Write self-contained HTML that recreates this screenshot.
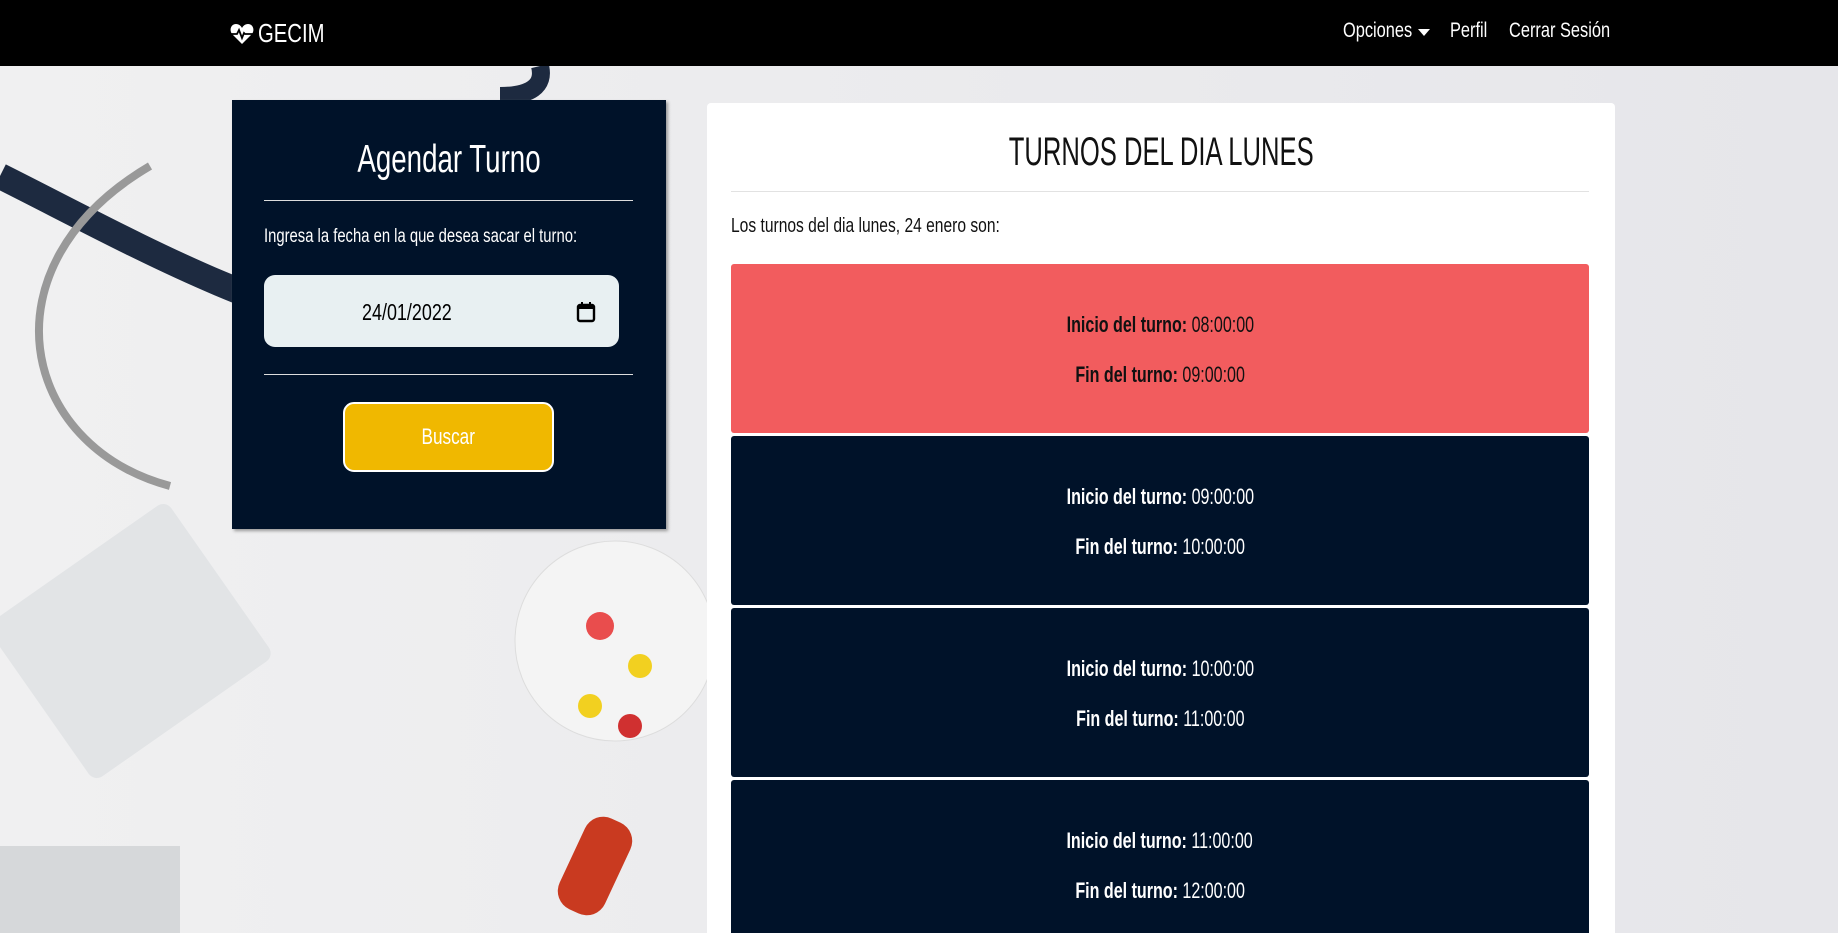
<!DOCTYPE html>
<html><head><meta charset="utf-8">
<style>
*{box-sizing:border-box;margin:0;padding:0}
html,body{width:1838px;height:933px;overflow:hidden}
body{font-family:"Liberation Sans",sans-serif;background:#e9e9ec;position:relative}
.wrap{position:absolute;left:0;top:0;width:1838px;height:933px;overflow:hidden}
.n{display:inline-block;transform:scaleX(.78);transform-origin:left center;white-space:nowrap}
.c{display:inline-block;transform:scaleX(.78);transform-origin:center center;white-space:nowrap}
.bg{position:absolute;left:0;top:66px;width:1838px;height:867px;background:linear-gradient(90deg,#f0f0f1 0%,#ececee 40%,#e6e6ea 100%)}
nav{position:absolute;left:0;top:0;width:1838px;height:66px;background:#000;color:#fff}
.brand{position:absolute;left:230px;top:18px;font-size:26px;display:flex;align-items:center;gap:4px}
.nl{position:absolute;top:19px;font-size:21px}
.card1{position:absolute;left:232px;top:100px;width:434px;height:429px;background:#001229;color:#fff;box-shadow:2px 2px 3px #999}
.card1 h2{position:absolute;left:0;width:100%;top:38px;text-align:center;font-weight:normal;font-size:39px}
.hr1{position:absolute;left:32px;width:369px;height:1px;background:#ddd}
.lbl{position:absolute;left:32px;top:126px;font-size:19px}
.inp{position:absolute;left:32px;top:175px;width:355px;height:72px;background:#e8f0f2;border-radius:11px;color:#000;font-size:23px}
.btn{position:absolute;left:111px;top:302px;width:211px;height:70px;background:#f0b800;border:2px solid #fff;border-radius:11px;color:#fff;font-size:22px;text-align:center;line-height:66px}
.card2{position:absolute;left:707px;top:103px;width:908px;height:850px;background:#fff;border-radius:4px}
.card2 h1{position:absolute;left:0;width:100%;top:27px;text-align:center;font-weight:normal;font-size:40px;color:#111}
.hr2{position:absolute;left:24px;top:88px;width:858px;height:1px;background:#e2e2e2}
.p{position:absolute;left:24px;top:112px;font-size:20px;color:#111}
.slot{position:absolute;left:24px;width:858px;height:169px;border-radius:3px;text-align:center;font-size:22px}
.slot div{position:absolute;left:0;width:100%}
.slot .c{transform:scaleX(.73)}
.slot b{font-weight:bold}
.r{background:#f25c5e;color:#111}
.d{background:#001229;color:#fff}
</style></head><body><div class="wrap">
<div class="bg">
<svg width="720" height="867" style="position:absolute;left:0;top:0">
<path d="M0 110 C120 170 260 250 380 265" stroke="#1d2a40" stroke-width="26" fill="none"/>
<path d="M150 100 C -20 200 20 380 170 420" stroke="#999" stroke-width="8" fill="none"/>
<path d="M540 0 C545 20 530 30 500 30" stroke="#1d2a40" stroke-width="18" fill="none"/>
<circle cx="615" cy="575" r="100" fill="#f4f4f4" stroke="#ddd"/>
<circle cx="600" cy="560" r="14" fill="#e94d4d"/><circle cx="640" cy="600" r="12" fill="#f2d020"/><circle cx="590" cy="640" r="12" fill="#f2d020"/><circle cx="630" cy="660" r="12" fill="#d03030"/>
<rect x="20" y="480" width="220" height="190" rx="10" fill="#e2e4e6" transform="rotate(-35 130 575)"/>
<rect x="0" y="780" width="180" height="90" fill="#d6d8da"/>
<rect x="570" y="750" width="50" height="100" rx="20" fill="#c93a20" transform="rotate(25 595 800)"/>
</svg>
</div>
<nav>
<div class="brand"><svg width="24" height="22" viewBox="0 0 24 22"><path d="M12 21 L2 11 C-1 7 1 1 6 1 C9 1 11 3 12 5 C13 3 15 1 18 1 C23 1 25 7 22 11 Z" fill="#fff"/><path d="M1 11 H7 L9 7 L12 15 L14 10 L15 11 H23" stroke="#000" stroke-width="1.8" fill="none"/></svg><span class="n">GECIM</span></div>
<div class="nl" style="left:1343px"><span class="n">Opciones</span></div>
<svg style="position:absolute;left:1418px;top:29px" width="12" height="7"><path d="M0 0H12L6 7Z" fill="#fff"/></svg>
<div class="nl" style="left:1450px"><span class="n">Perfil</span></div>
<div class="nl" style="left:1509px"><span class="n">Cerrar Sesión</span></div>
</nav>
<div class="card1">
<h2><span class="c" style="transform:scaleX(.71)">Agendar Turno</span></h2>
<div class="hr1" style="top:100px"></div>
<div class="lbl"><span class="n">Ingresa la fecha en la que desea sacar el turno:</span></div>
<div class="inp"><span class="n" style="position:absolute;left:98px;top:24px">24/01/2022</span>
<svg style="position:absolute;left:312px;top:26px" width="20" height="22" viewBox="0 0 20 22"><rect x="2" y="4" width="16" height="16" rx="2" fill="none" stroke="#000" stroke-width="2.4"/><rect x="2" y="4" width="16" height="4" fill="#000"/><rect x="5" y="1" width="2" height="4" fill="#000"/><rect x="13" y="1" width="2" height="4" fill="#000"/></svg></div>
<div class="hr1" style="top:274px"></div>
<div class="btn"><span class="c">Buscar</span></div>
</div>
<div class="card2">
<h1><span class="c" style="transform:scaleX(.64)">TURNOS DEL DIA LUNES</span></h1>
<div class="hr2"></div>
<div class="p"><span class="n">Los turnos del dia lunes, 24 enero son:</span></div>
<div class="slot r" style="top:161px"><div style="top:48px"><span class="c"><b>Inicio del turno:</b> 08:00:00</span></div><div style="top:98px"><span class="c"><b>Fin del turno:</b> 09:00:00</span></div></div>
<div class="slot d" style="top:333px"><div style="top:48px"><span class="c"><b>Inicio del turno:</b> 09:00:00</span></div><div style="top:98px"><span class="c"><b>Fin del turno:</b> 10:00:00</span></div></div>
<div class="slot d" style="top:505px"><div style="top:48px"><span class="c"><b>Inicio del turno:</b> 10:00:00</span></div><div style="top:98px"><span class="c"><b>Fin del turno:</b> 11:00:00</span></div></div>
<div class="slot d" style="top:677px"><div style="top:48px"><span class="c"><b>Inicio del turno:</b> 11:00:00</span></div><div style="top:98px"><span class="c"><b>Fin del turno:</b> 12:00:00</span></div></div>
</div>
</div></body></html>
